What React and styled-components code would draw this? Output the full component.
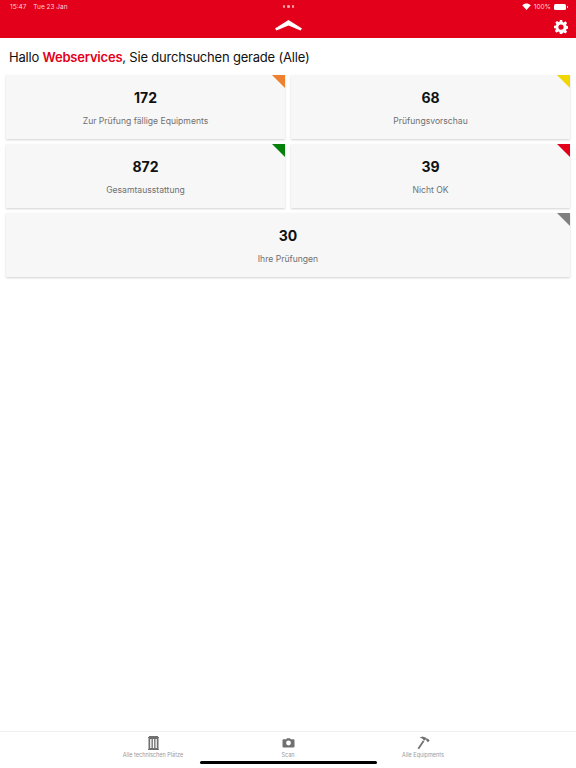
import styled, { createGlobalStyle } from 'styled-components';

const GlobalStyle = createGlobalStyle`
    html, body {
        margin: 0;
        padding: 0;
        background: #fff;
        font-family: Inter, "Liberation Sans", sans-serif;
    }
`;

const cards = [
    { id: 1, count: 172, label: 'Zur Prüfung fällige Equipments', color: '#ee8130' },
    { id: 2, count: 68, label: 'Prüfungsvorschau', color: '#f2d600' },
    { id: 3, count: 872, label: 'Gesamtausstattung', color: '#04800b' },
    { id: 4, count: 39, label: 'Nicht OK', color: '#e2001a' },
    { id: 5, count: 30, label: 'Ihre Prüfungen', color: '#808080', wide: true },
];

const App = () => {
    return (
        <Page>
            <GlobalStyle />
            <Header>
                <StatusBar>
                    <StatusLeft>
                        <span>15:47</span>
                        <span>Tue 23 Jan</span>
                    </StatusLeft>
                    <Dots><i /><i /><i /></Dots>
                    <StatusRight>
                        <svg width="9" height="7" viewBox="0 0 18 14" fill="#fff">
                            <path d="M9 14 0.5 4.6C5.5 0 12.5 0 17.5 4.6Z" />
                        </svg>
                        <span>100%</span>
                        <Battery />
                    </StatusRight>
                </StatusBar>
                <NavBar>
                    <LogoSlot>
                        <svg width="27" height="11" viewBox="0 0 27 11" fill="#fff">
                            <path d="M13.500 0 27 8.600 25.500 10.500 13.500 5.600 1.500 10.500 0 8.600Z" />
                        </svg>
                    </LogoSlot>
                    <SettingsButton>
                        <svg width="14" height="14" viewBox="0 0 24 24" fill="#fff">
                            <path fillRule="evenodd" d="M10 0h4l.7 3.300 2 .8 2.900-1.800 2.800 2.800-1.800 2.900.8 2 3.300.7v4l-3.300.7-.8 2 1.800 2.900-2.800 2.800-2.900-1.800-2 .8L14 24h-4l-.7-3.300-2-.8-2.900 1.800-2.800-2.800 1.800-2.900-.8-2L0 14v-4l3.300-.7.8-2-1.800-2.900 2.800-2.800 2.900 1.800 2-.8ZM12 7.500a4.500 4.500 0 1 0 0 9 4.500 4.500 0 0 0 0-9Z" />
                        </svg>
                    </SettingsButton>
                </NavBar>
            </Header>

            <Main>
                <Greeting>
                    Hallo <strong>Webservices</strong>, Sie durchsuchen gerade (Alle)
                </Greeting>
                <CardGrid>
                    {cards.map(c => (
                        <Card key={c.id} $wide={c.wide} $color={c.color}>
                            <Count>{c.count}</Count>
                            <Label>{c.label}</Label>
                        </Card>
                    ))}
                </CardGrid>
            </Main>

            <TabBar>
                <Tab>
                    <svg width="11" height="14" viewBox="0 0 11 14" fill="#707070">
                        <path fillRule="evenodd" d="M1 0h9v1h1v1h-.5v11h.5v1H0v-1h.5V2H0V1h1ZM2.200 3v9h1.300V3Zm2.650 0v9h1.300V3Zm2.650 0v9h1.300V3Z" />
                    </svg>
                    <TabLabel>Alle technischen Plätze</TabLabel>
                </Tab>
                <Tab>
                    <svg width="13" height="14" viewBox="0 0 13 14" fill="#707070">
                        <path fillRule="evenodd" d="M4.300 3.200 5 2.200h3l.7 1h2.800q1 0 1 1v6.400q0 1-1 1h-10q-1 0-1-1V4.200q0-1 1-1ZM6.500 4.600a2.400 2.400 0 1 0 0 4.800 2.400 2.400 0 0 0 0-4.800Z" />
                    </svg>
                    <TabLabel>Scan</TabLabel>
                </Tab>
                <Tab>
                    <svg width="14" height="14" viewBox="0 0 14 14" fill="#707070">
                        <path d="M3.500 1.800 6.500 0.600 9.500 1.600 11 2.800 12 2.800 13.600 4.600 12 6.200 10.400 4.800 10.400 3.800 9.200 3.400 8.400 4.800 7.200 3.800 7 3 5.500 2.200ZM7 4.200 8.300 5.400 3 13.200 1.600 12.200Z" />
                    </svg>
                    <TabLabel>Alle Equipments</TabLabel>
                </Tab>
                <HomeIndicator />
            </TabBar>
        </Page>
    );
};

const Page = styled.div`
    display: flex;
    flex-direction: column;
    height: 768px;
    overflow: hidden;
`;

const Header = styled.header`
    background: #e2001a;
    height: 38px;
    flex: none;
    color: #fff;
`;

const StatusBar = styled.div`
    display: grid;
    grid-template-columns: 1fr auto 1fr;
    align-items: center;
    height: 13px;
    padding: 0 9px 0 10px;
    font-size: 6.500px;
    color: #fbd5da;
`;

const StatusLeft = styled.div`
    display: flex;
    gap: 7px;
`;

const Dots = styled.div`
    display: flex;
    gap: 2px;
    i {
        width: 2.500px;
        height: 2.500px;
        border-radius: 50%;
        background: #f7a0aa;
    }
`;

const StatusRight = styled.div`
    display: flex;
    align-items: center;
    justify-content: flex-end;
    gap: 3px;
`;

const Battery = styled.div`
    position: relative;
    width: 12px;
    height: 6px;
    margin-right: 1px;
    border-radius: 1.500px;
    background: #fff;
    &::after {
        content: '';
        position: absolute;
        top: 2px;
        right: -1.500px;
        width: 1px;
        height: 2px;
        background: #fbd5da;
    }
`;

const NavBar = styled.div`
    position: relative;
    display: flex;
    justify-content: center;
    height: 25px;
`;

const LogoSlot = styled.div`
    margin-top: 7px;
    line-height: 0;
`;

const SettingsButton = styled.div`
    position: absolute;
    top: 7px;
    right: 8px;
    line-height: 0;
`;

const Main = styled.main`
    flex: 1;
    padding: 0 6px;
`;

const Greeting = styled.h1`
    margin: 0;
    padding: 10px 3px 0;
    height: 37px;
    box-sizing: border-box;
    font-size: 13px;
    line-height: 18px;
    letter-spacing: -0.2px;
    font-weight: 400;
    color: #111;
    strong {
        color: #e2001a;
        font-weight: 600;
    }
`;

const CardGrid = styled.div`
    display: grid;
    grid-template-columns: 1fr 1fr;
    column-gap: 6px;
    row-gap: 5px;
`;

const Card = styled.div`
    position: relative;
    grid-column: ${p => (p.$wide ? '1 / -1' : 'auto')};
    display: flex;
    flex-direction: column;
    align-items: center;
    height: 64px;
    background: #f7f7f7;
    box-shadow: 0 1px 2px rgba(0, 0, 0, 0.18);
    &::after {
        content: '';
        position: absolute;
        top: 0;
        right: 0;
        border-style: solid;
        border-width: 0 13px 13px 0;
        border-color: transparent ${p => p.$color} transparent transparent;
    }
`;

const Count = styled.div`
    margin-top: 14px;
    font-size: 14px;
    line-height: 17px;
    font-weight: 700;
    color: #111;
`;

const Label = styled.div`
    margin-top: 9px;
    font-size: 8.600px;
    line-height: 12px;
    color: #707070;
`;

const TabBar = styled.nav`
    position: relative;
    display: grid;
    grid-template-columns: 135px 135px 135px;
    justify-content: center;
    height: 37px;
    flex: none;
    border-top: 1px solid #f0f0f0;
    box-sizing: border-box;
`;

const Tab = styled.div`
    display: flex;
    flex-direction: column;
    align-items: center;
    padding-top: 4px;
`;

const TabLabel = styled.span`
    margin-top: 2px;
    font-size: 5.500px;
    line-height: 7px;
    color: #9a9a9a;
`;

const HomeIndicator = styled.div`
    position: absolute;
    left: 200px;
    bottom: 4px;
    width: 177px;
    height: 3px;
    border-radius: 2px;
    background: #000;
`;

export default App;
